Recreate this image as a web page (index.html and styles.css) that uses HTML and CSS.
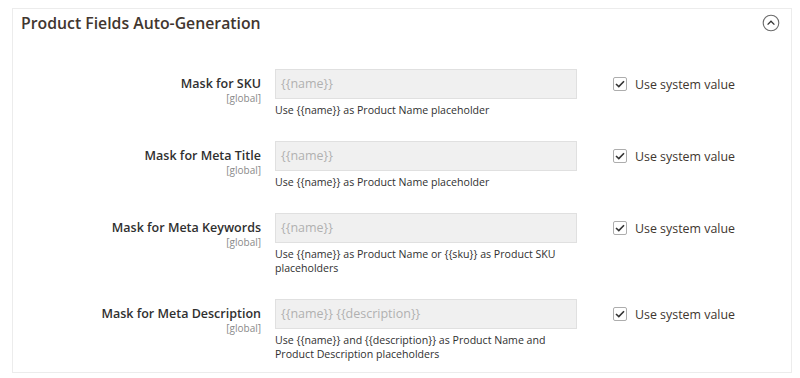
FILE: index.html
```html
<!DOCTYPE html>
<html>
<head>
<meta charset="utf-8">
<link rel="stylesheet" href="styles.css">
</head>
<body>
<section class="panel">
  <header class="panel-head">
    <h2 class="panel-title">Product Fields Auto-Generation</h2>
    <span class="toggle">
      <svg width="18" height="18" viewBox="0 0 18 18"><circle cx="9" cy="9" r="7.8" fill="none" stroke="#6b6b6b" stroke-width="1.1"/><path d="M5.6 10.6 L9 7.2 L12.4 10.6" fill="none" stroke="#333" stroke-width="1.3"/></svg>
    </span>
  </header>
  <div class="rows">
    <div class="row">
      <div class="label"><span class="label-text">Mask for SKU</span><span class="scope">[global]</span></div>
      <div class="control"><div class="input">{{name}}</div><div class="note">Use {{name}} as Product Name placeholder</div></div>
      <label class="sys"><span class="check"><svg width="10" height="8" viewBox="0 0 10 8"><path d="M1 4 L3.8 6.6 L9 1.2" fill="none" stroke="#333" stroke-width="1.6"/></svg></span>Use system value</label>
    </div>
    <div class="row">
      <div class="label"><span class="label-text">Mask for Meta Title</span><span class="scope">[global]</span></div>
      <div class="control"><div class="input">{{name}}</div><div class="note">Use {{name}} as Product Name placeholder</div></div>
      <label class="sys"><span class="check"><svg width="10" height="8" viewBox="0 0 10 8"><path d="M1 4 L3.8 6.6 L9 1.2" fill="none" stroke="#333" stroke-width="1.6"/></svg></span>Use system value</label>
    </div>
    <div class="row">
      <div class="label"><span class="label-text">Mask for Meta Keywords</span><span class="scope">[global]</span></div>
      <div class="control"><div class="input">{{name}}</div><div class="note">Use {{name}} as Product Name or {{sku}} as Product SKU placeholders</div></div>
      <label class="sys"><span class="check"><svg width="10" height="8" viewBox="0 0 10 8"><path d="M1 4 L3.8 6.6 L9 1.2" fill="none" stroke="#333" stroke-width="1.6"/></svg></span>Use system value</label>
    </div>
    <div class="row">
      <div class="label"><span class="label-text">Mask for Meta Description</span><span class="scope">[global]</span></div>
      <div class="control"><div class="input">{{name}} {{description}}</div><div class="note">Use {{name}} and {{description}} as Product Name and Product Description placeholders</div></div>
      <label class="sys"><span class="check"><svg width="10" height="8" viewBox="0 0 10 8"><path d="M1 4 L3.8 6.6 L9 1.2" fill="none" stroke="#333" stroke-width="1.6"/></svg></span>Use system value</label>
    </div>
  </div>
</section>
</body>
</html>
```
FILE: styles.css
```css
* { box-sizing: border-box; }
html, body { background: #fff; }
body {
  margin: 0;
  padding: 8px 8px 0 12px;
  font-family: "Open Sans", "Noto Sans", sans-serif;
  color: #303030;
}
.panel {
  width: 780px;
  height: 365px;
  border: 1px solid #ececec;
  padding: 1px 0 0 0;
}
.panel-head {
  display: flex;
  justify-content: space-between;
  align-items: center;
  padding: 0 11px 0 8px;
  height: 26px;
}
.panel-title {
  margin: 0;
  font-size: 15.8px;
  font-weight: 600;
  line-height: 22px;
  color: #41362f;
}
.toggle { display: flex; }
.rows {
  display: flex;
  flex-direction: column;
  gap: 24px;
  margin-top: 33px;
}
.row {
  display: grid;
  grid-template-columns: 248px 302px auto;
  column-gap: 14px;
  align-items: start;
}
.label {
  display: flex;
  flex-direction: column;
  align-items: flex-end;
  padding-top: 6px;
}
.label-text {
  font-size: 12.5px;
  font-weight: 600;
  line-height: 17px;
}
.scope {
  margin-top: 1px;
  font-size: 10px;
  line-height: 11px;
  color: #8a8a8a;
}
.input {
  height: 30px;
  border: 1px solid #e0e0e0;
  background: #f0f0f0;
  color: #b0b0b0;
  font-size: 12.5px;
  line-height: 28px;
  padding: 0 5px;
}
.note {
  margin-top: 4px;
  font-size: 10.6px;
  line-height: 14px;
  color: #303030;
  padding-right: 20px;
}
.sys {
  display: flex;
  align-items: center;
  gap: 8px;
  margin-left: 22px;
  height: 30px;
  font-size: 12.4px;
  color: #41362f;
}
.check {
  width: 14px;
  height: 14px;
  border: 1px solid #adadad;
  border-radius: 2px;
  display: flex;
  align-items: center;
  justify-content: center;
  background: #fff;
}
```
